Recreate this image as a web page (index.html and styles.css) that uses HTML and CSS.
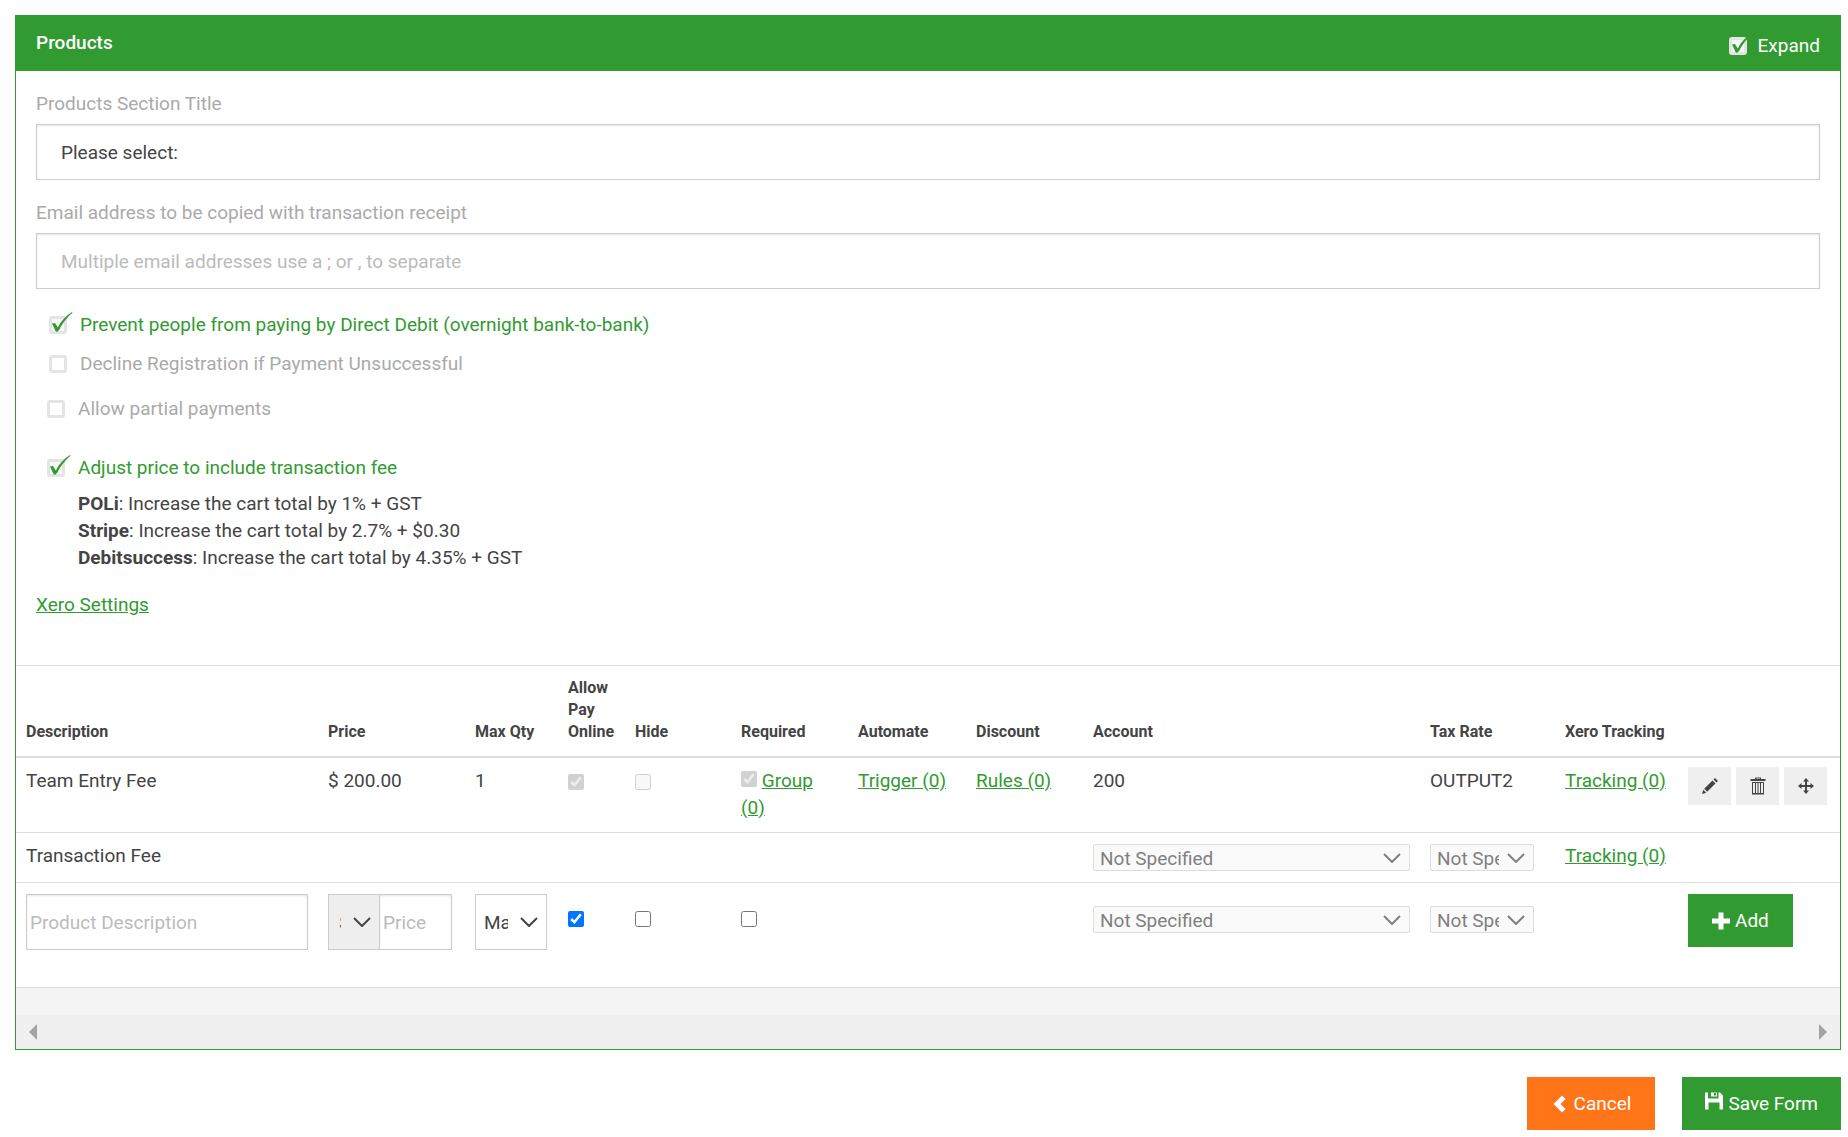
FILE: index.html
```html
<!DOCTYPE html>
<html lang="en">
	<head>
		<meta charset="UTF-8">
		<meta name="viewport" content="width=device-width, initial-scale=1.0">
		<title>Products</title>
		<link rel="stylesheet" href="styles.css">
	</head>
	<body>
		<svg class="sprite" aria-hidden="true">
			<symbol id="tick" viewBox="0 0 24 24">
				<path d="M3 11.500 L6 11 L8.800 15.500 C12 9 17 3.500 23 0 L23.500 0.800 C18 5.500 13 12 10.500 17.500 L8 20 L6.500 19 Z"/>
			</symbol>
		</svg>
		<form id="productsForm">
			<section class="panel">
				<header class="panel-heading">
					<h2>Products</h2>
					<div class="expand">
						<span class="check">
							<input type="checkbox" id="expand" checked>
							<svg><use href="#tick"/></svg>
						</span>
						<label for="expand">Expand</label>
					</div>
				</header>
				<div class="panel-body">
					<div class="form-group">
						<label for="sectionTitle">Products Section Title</label>
						<input type="text" id="sectionTitle" class="form-control" value="Please select:">
					</div>
					<div class="form-group">
						<label for="email">Email address to be copied with transaction receipt</label>
						<input type="text" id="email" class="form-control" placeholder="Multiple email addresses use a ; or , to separate">
					</div>
					<div class="options payment">
						<div class="option">
							<span class="check">
								<input type="checkbox" id="preventDebit" checked>
								<svg><use href="#tick"/></svg>
							</span>
							<label for="preventDebit">Prevent people from paying by Direct Debit (overnight bank-to-bank)</label>
						</div>
						<div class="option">
							<span class="check"><input type="checkbox" id="decline"></span>
							<label for="decline">Decline Registration if Payment Unsuccessful</label>
						</div>
					</div>
					<div class="options pricing">
						<div class="option">
							<span class="check"><input type="checkbox" id="partial"></span>
							<label for="partial">Allow partial payments</label>
						</div>
						<div class="option">
							<span class="check">
								<input type="checkbox" id="adjust" checked>
								<svg><use href="#tick"/></svg>
							</span>
							<label for="adjust">Adjust price to include transaction fee</label>
						</div>
						<p class="fees">
							<strong>POLi</strong>: Increase the cart total by 1% + GST<br>
							<strong>Stripe</strong>: Increase the cart total by 2.7% + $0.30<br>
							<strong>Debitsuccess</strong>: Increase the cart total by 4.35% + GST
						</p>
					</div>
					<a href="#xero">Xero Settings</a>
				</div>
				<table class="products">
					<colgroup>
						<col>
						<col class="col-price">
						<col class="col-qty">
						<col class="col-online">
						<col class="col-hide">
						<col class="col-required">
						<col class="col-automate">
						<col class="col-discount">
						<col class="col-account">
						<col class="col-tax">
						<col class="col-tracking">
						<col class="col-actions">
					</colgroup>
					<thead>
						<tr>
							<th>Description</th>
							<th>Price</th>
							<th>Max Qty</th>
							<th>Allow Pay Online</th>
							<th>Hide</th>
							<th>Required</th>
							<th>Automate</th>
							<th>Discount</th>
							<th>Account</th>
							<th>Tax Rate</th>
							<th>Xero Tracking</th>
							<th></th>
						</tr>
					</thead>
					<tbody>
						<tr>
							<td>Team Entry Fee</td>
							<td>$ 200.00</td>
							<td>1</td>
							<td><input type="checkbox" class="box" aria-label="Allow pay online" checked disabled></td>
							<td><input type="checkbox" class="box" aria-label="Hide" disabled></td>
							<td><input type="checkbox" class="box-inline" aria-label="Required" checked disabled> <a href="#group">Group (0)</a></td>
							<td><a href="#trigger">Trigger (0)</a></td>
							<td><a href="#rules">Rules (0)</a></td>
							<td>200</td>
							<td>OUTPUT2</td>
							<td><a href="#tracking">Tracking (0)</a></td>
							<td>
								<div class="actions">
									<button type="button" aria-label="Edit">
										<svg class="icon" viewBox="0 0 18 18"><path d="M1 17 L2.300 12.700 L5.300 15.700 Z M3.200 11.800 L11.500 3.500 L14.500 6.500 L6.200 14.800 Z M12.500 2.500 L14 1 L17 4 L15.500 5.500 Z"/></svg>
									</button>
									<button type="button" aria-label="Delete">
										<svg class="icon" viewBox="0 0 18 18"><path fill-rule="evenodd" d="M6 2 V0.500 H12 V2 H16.500 V4 H1.500 V2 Z M7 2 H11 V1.500 H7 Z M3 5 H15 V17.500 H3 Z M4 6 V16 H6 V6 Z M7 6 V16 H8.500 V6 Z M9.500 6 V16 H11 V6 Z M12 6 V16 H14 V6 Z"/></svg>
									</button>
									<button type="button" aria-label="Move">
										<svg class="icon" viewBox="0 0 18 18"><path d="M9 1 L12 4.500 H10 V8 H13.500 V6 L17 9 L13.500 12 V10 H10 V13.500 H12 L9 17 L6 13.500 H8 V10 H4.500 V12 L1 9 L4.500 6 V8 H8 V4.500 H6 Z"/></svg>
									</button>
								</div>
							</td>
						</tr>
						<tr>
							<td>Transaction Fee</td>
							<td></td>
							<td></td>
							<td></td>
							<td></td>
							<td></td>
							<td></td>
							<td></td>
							<td>
								<span class="select small">
									<select aria-label="Transaction fee account" disabled><option>Not Specified</option></select>
									<svg viewBox="0 0 18 10"><path d="M1 1 L9 9 L17 1"/></svg>
								</span>
							</td>
							<td>
								<span class="select small tax">
									<select aria-label="Transaction fee tax rate" disabled><option>Not Specified</option></select>
									<svg viewBox="0 0 18 10"><path d="M1 1 L9 9 L17 1"/></svg>
								</span>
							</td>
							<td><a href="#tracking">Tracking (0)</a></td>
							<td></td>
						</tr>
						<tr class="new-product">
							<td><input type="text" class="form-control" placeholder="Product Description" aria-label="Product description"></td>
							<td>
								<div class="price">
									<span class="select currency">
										<select aria-label="Currency"><option>$</option></select>
										<svg viewBox="0 0 18 10"><path d="M1 1 L9 9 L17 1"/></svg>
									</span>
									<input type="text" class="form-control" placeholder="Price" aria-label="Price">
								</div>
							</td>
							<td>
								<span class="select quantity">
									<select aria-label="Max quantity"><option>Max</option></select>
									<svg viewBox="0 0 18 10"><path d="M1 1 L9 9 L17 1"/></svg>
								</span>
							</td>
							<td class="middle"><input type="checkbox" class="box" aria-label="Allow pay online" checked></td>
							<td class="middle"><input type="checkbox" class="box" aria-label="Hide"></td>
							<td class="middle"><input type="checkbox" class="box" aria-label="Required"></td>
							<td></td>
							<td></td>
							<td class="middle">
								<span class="select small">
									<select aria-label="Account" disabled><option>Not Specified</option></select>
									<svg viewBox="0 0 18 10"><path d="M1 1 L9 9 L17 1"/></svg>
								</span>
							</td>
							<td class="middle">
								<span class="select small tax">
									<select aria-label="Tax rate" disabled><option>Not Specified</option></select>
									<svg viewBox="0 0 18 10"><path d="M1 1 L9 9 L17 1"/></svg>
								</span>
							</td>
							<td></td>
							<td>
								<button type="button" class="btn">
									<svg class="icon" viewBox="0 0 18 18"><path d="M6.500 0.500 H11.500 V6.500 H18 V11.500 H11.500 V17.500 H6.500 V11.500 H0 V6.500 H6.500 Z"/></svg>
									Add
								</button>
							</td>
						</tr>
					</tbody>
				</table>
				<footer class="panel-footer">
					<div class="scrollbar">
						<svg viewBox="0 0 8 16"><path d="M8 0 V16 L0 8 Z"/></svg>
						<svg viewBox="0 0 8 16"><path d="M0 0 V16 L8 8 Z"/></svg>
					</div>
				</footer>
			</section>
			<div class="form-actions">
				<button type="button" class="btn btn-cancel">
					<svg class="icon" viewBox="0 0 18 18"><path d="M11 0.500 L14.500 4 L9.500 9 L14.500 14 L11 17.500 L2.500 9 Z"/></svg>
					Cancel
				</button>
				<button type="submit" class="btn btn-save">
					<svg class="icon" viewBox="0 0 18 18"><path fill-rule="evenodd" d="M0 0.500 H3 V6.500 H13.500 V0.500 H15 L18 3.500 V17.500 H14.500 V10.500 H3.500 V17.500 H0 Z M6 0.500 H12 V4.500 H6 Z M9 1 V3.500 H11 V1 Z"/></svg>
					Save Form
				</button>
			</div>
		</form>
	</body>
</html>
```
FILE: styles.css
```css
* {
    box-sizing: border-box;
}
body {
    background-color: white;
    color: #444;
    font-family: Roboto, sans-serif;
    font-size: 19px;
    line-height: 27px;
    margin: 0;
    padding: 15px 7px 8px 15px;
}
input, select, button {
    color: inherit;
    font: inherit;
    margin: 0;
}
a {
    color: #319b31;
    text-decoration: underline;
}
.sprite {
    display: none;
}
.panel {
    border: 1px solid #319b31;
}
.panel-heading {
    align-items: center;
    background-color: #319b31;
    color: white;
    display: flex;
    justify-content: space-between;
    min-height: 55px;
    padding: 0 20px 2px;
}
.panel-heading h2 {
    font-size: 19px;
    font-weight: 500;
    line-height: 27px;
    margin: 0;
}
.expand {
    display: flex;
    gap: 11px;
    padding-top: 6px;
}
.panel-body {
    padding: 19px 20px 47px;
}
.form-group {
    display: flex;
    flex-direction: column;
    gap: 7px;
    margin-bottom: 19px;
}
.form-group label {
    color: #aaa;
}
.form-control {
    background-color: white;
    border: 1px solid #ccc;
    border-radius: 0;
    box-shadow: inset 0 1px 2px rgba(0,0,0,.1);
    height: 56px;
    padding: 0 24px;
    width: 100%;
}
.form-control::placeholder {
    color: #bbb;
    opacity: 1;
}

/* tick boxes */
.options {
    display: flex;
    flex-direction: column;
}
.payment {
    gap: 12px;
    padding: 3px 0 0 13px;
}
.pricing {
    padding: 18px 0 20px 11px;
}
.pricing .option:nth-child(2) {
    margin-top: 32px;
}
.option {
    align-items: center;
    color: #aaa;
    display: flex;
    gap: 13px;
}
.option:has(:checked) {
    color: #319b31;
}
.check {
    align-self: center;
    display: flex;
    height: 18px;
    position: relative;
    width: 18px;
}
.check input {
    appearance: none;
    background-color: white;
    border: 3px solid #e4e4e4;
    border-radius: 3px;
    height: 18px;
    width: 18px;
}
.check input:checked {
    background-color: #f8f8f8;
}
.check svg {
    fill: #319b31;
    height: 24px;
    left: 0;
    pointer-events: none;
    position: absolute;
    top: -4px;
    width: 24px;
}
.fees {
    margin: 9px 0 0 31px;
}

/* product list */
.products {
    border-collapse: collapse;
    table-layout: fixed;
    width: 100%;
}
.col-price {
    width: 147px;
}
.col-qty {
    width: 93px;
}
.col-online {
    width: 67px;
}
.col-hide {
    width: 106px;
}
.col-required, .col-discount {
    width: 117px;
}
.col-automate {
    width: 118px;
}
.col-account {
    width: 337px;
}
.col-tax {
    width: 135px;
}
.col-tracking {
    width: 123px;
}
.col-actions {
    width: 162px;
}
.products th, .products td {
    border-top: 1px solid #ddd;
    padding: 9px 10px 11px;
    text-align: left;
    vertical-align: top;
}
.products th {
    border-bottom: 2px solid #ddd;
    font-size: 16px;
    font-weight: 700;
    line-height: 22px;
    padding: 11px 10px 13px;
    vertical-align: bottom;
}
.products .new-product td {
    padding: 11px 10px 37px;
}
.products .new-product .middle {
    padding-top: 21px;
}
.products .form-control {
    padding: 0 3px;
}
.box {
    display: block;
    height: 16px;
    margin-top: 7px;
    width: 16px;
}
.box-inline {
    height: 16px;
    width: 16px;
}
.select {
    display: block;
    position: relative;
}
.select select {
    appearance: none;
    background-color: white;
    border: 1px solid #ccc;
    border-radius: 0;
    height: 56px;
    opacity: 1;
    padding: 0 38px 0 8px;
    width: 100%;
}
.select svg {
    fill: none;
    height: 10px;
    pointer-events: none;
    position: absolute;
    right: 9px;
    stroke: #444;
    stroke-width: 2;
    top: calc(50% - 5px);
    width: 18px;
}
.small {
    margin-top: 2px;
}
.select.small select {
    background-color: #fafafa;
    border-color: #ddd;
    border-radius: 2px;
    color: #808080;
    display: block;
    height: 27px;
    padding: 0 34px 0 6px;
}
.small svg {
    stroke: #808080;
}
.tax {
    width: 104px;
}
.price {
    display: flex;
    width: 124px;
}
.currency {
    flex: 0 0 52px;
}
.select.currency select {
    background-color: #eee;
    padding-left: 10px;
}
.price .form-control {
    border-left: 0;
    flex: 1;
    min-width: 0;
}
.quantity {
    width: 72px;
}
.icon {
    fill: currentColor;
    height: 18px;
    width: 18px;
}
.actions {
    display: flex;
    gap: 5px;
}
.actions button {
    align-items: center;
    background-color: #efefef;
    border: 0;
    display: flex;
    height: 38px;
    justify-content: center;
    padding: 0;
    width: 43px;
}
.panel-footer {
    background-color: #f4f4f4;
    border-top: 1px solid #ddd;
    padding-top: 27px;
}
.scrollbar {
    align-items: center;
    background-color: #f0f0f0;
    display: flex;
    height: 34px;
    justify-content: space-between;
    padding: 0 13px;
}
.scrollbar svg {
    fill: #a3a3a3;
    height: 16px;
    width: 8px;
}

.btn {
    align-items: center;
    background-color: #319b31;
    border: 0;
    color: white;
    cursor: pointer;
    display: flex;
    gap: 5px;
    height: 53px;
    padding: 0 24px;
}
.btn-cancel {
    background-color: #ff7518;
}
.btn-save {
    padding: 0 23px;
}
.btn-save .icon {
    margin-bottom: 5px;
}
.form-actions {
    display: flex;
    gap: 27px;
    justify-content: flex-end;
    margin-top: 27px;
}
```
